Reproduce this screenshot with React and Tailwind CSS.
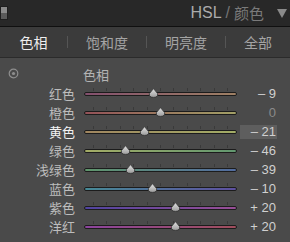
import React from "react";

const rows = [
  { label: "红色", value: -9, from: "#84506e", to: "#9e8064" },
  { label: "橙色", value: 0, from: "#945258", to: "#a2a066" },
  { label: "黄色", value: -21, from: "#a08660", to: "#a2ac66" },
  { label: "绿色", value: -46, from: "#a4ac66", to: "#629870", active: false },
  { label: "浅绿色", value: -39, from: "#60966c", to: "#526ca0" },
  { label: "蓝色", value: -10, from: "#468a96", to: "#5e50a0" },
  { label: "紫色", value: 20, from: "#5044a0", to: "#984e96" },
  { label: "洋红", value: 20, from: "#8c449e", to: "#a04e5c" },
];
rows[2].active = true;

const cjk = { fontFamily: '"Noto Sans CJK SC", "Noto Sans", sans-serif' };
const num = { fontFamily: '"Liberation Sans", Arial, sans-serif' };

function formatValue(v) {
  if (v === 0) return "0";
  return v > 0 ? `+ ${v}` : `– ${Math.abs(v)}`;
}

function Thumb() {
  return (
    <svg width="11" height="10" viewBox="0 0 11 10">
      <defs>
        <linearGradient id="thumbFill" x1="0" y1="0" x2="0" y2="1">
          <stop offset="0" stopColor="#e2e2e2" />
          <stop offset="1" stopColor="#9c9c9c" />
        </linearGradient>
      </defs>
      <path d="M5.5 0.6 L9.6 5.6 Q10.3 9.4 5.5 9.4 Q0.7 9.4 1.4 5.6 Z" fill="url(#thumbFill)" stroke="#2e2e2e" strokeWidth="0.8" />
    </svg>
  );
}

function Slider({ value, from, to }) {
  const left = 76.5 + value * 0.76;
  return (
    <div className="relative w-[153px] h-[19px] flex items-center">
      <div className="absolute left-0 right-0 top-[4px] flex justify-between px-[9px]">
        {Array.from({ length: 11 }).map((_, i) => (
          <div key={i} className="w-px h-[3px] bg-[#3a3a3a]" />
        ))}
      </div>
      <div
        className="w-full h-[4px] rounded-[2px] border border-[#1c1c1c]"
        style={{ background: `linear-gradient(to right, ${from}, ${to})` }}
      />
      <div className="absolute top-[4px]" style={{ left: left - 5.5 }}>
        <Thumb />
      </div>
    </div>
  );
}

export default function App() {
  return (
    <div className="w-[290px] h-[242px] bg-[#4a4a4a] overflow-hidden select-none">
      <div className="h-[26px] bg-[#282828] flex items-center relative">
        <div className="absolute left-0 top-[6px] w-[8px] h-[14px] border border-[#1e1e1e] flex flex-col">
          <div className="flex-1 bg-[#8a8a8a]" />
          <div className="flex-1 bg-[#5a5a5a]" />
        </div>
        <div className="ml-auto flex items-center pr-[3px]">
          <span className="text-[16px] text-[#ababab]" style={num}>HSL</span>
          <span className="text-[16px] text-[#747474] ml-[4px]" style={num}>/</span>
          <span className="text-[15px] text-[#7a7a7a] ml-[4px]" style={cjk}>颜色</span>
          <svg width="10" height="9" viewBox="0 0 10 9" className="ml-[13px]">
            <path d="M0 0 H10 L5 9 Z" fill="#8a8a8a" />
          </svg>
        </div>
      </div>
      <div className="h-px bg-[#101010]" />
      <div className="h-[31px] bg-[#3b3b3b] border-b border-[#2b2b2b] flex items-center text-[14px]" style={cjk}>
        <div className="w-[67px] text-center text-[#eeeeee]">色相</div>
        <div className="w-px h-[12px] bg-[#555555]" />
        <div className="w-[78px] text-center text-[#a4a4a4]">饱和度</div>
        <div className="w-px h-[12px] bg-[#555555]" />
        <div className="w-[78px] text-center text-[#a4a4a4]">明亮度</div>
        <div className="w-px h-[12px] bg-[#555555]" />
        <div className="flex-1 text-center text-[#a4a4a4]">全部</div>
      </div>
      <div className="pt-[7px]">
        <div className="h-[19px] flex items-center relative">
          <svg width="11" height="11" viewBox="0 0 11 11" className="absolute left-[8px] top-[3px]">
            <circle cx="5.5" cy="5.5" r="4.3" fill="none" stroke="#8e8e8e" strokeWidth="1.2" />
            <circle cx="5.5" cy="5.5" r="1.6" fill="#8e8e8e" />
          </svg>
          <div className="ml-[83px] text-[13px] text-[#b4b4b4]" style={cjk}>色相</div>
        </div>
        {rows.map((r) => (
          <div key={r.label} className="h-[19px] flex items-center">
            <div
              className={`w-[76px] text-right text-[13px] pr-[1px] ${r.active ? "text-[#f2f2f2]" : "text-[#bdbdbd]"}`}
              style={cjk}
            >
              {r.label}
            </div>
            <div className="ml-[8px]">
              <Slider value={r.value} from={r.from} to={r.to} />
            </div>
            <div
              className={`ml-[3px] w-[37px] h-[14px] flex items-center justify-end pr-[1px] text-[13px] ${
                r.active ? "bg-[#5e5e5e]" : ""
              } ${r.value === 0 ? "text-[#8a8a8a]" : "text-[#d0d0d0]"}`}
              style={num}
            >
              {formatValue(r.value)}
            </div>
          </div>
        ))}
      </div>
    </div>
  );
}
